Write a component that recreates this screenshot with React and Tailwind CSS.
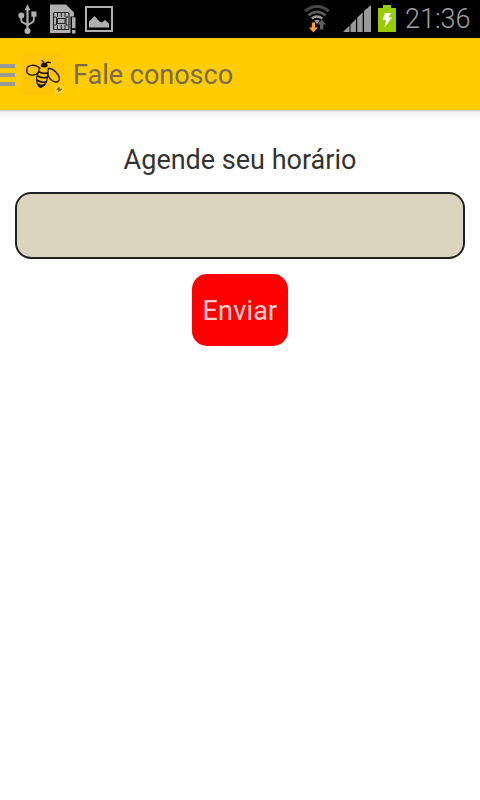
import { useState } from 'react';

const UsbIcon = () => (
  <svg className="w-[20px] h-[30px]" viewBox="0 0 20 30" fill="none" stroke="#b0b0b0" strokeWidth="1.8">
    <path d="M9.500 4v20" strokeWidth="2.2" />
    <path d="M3.200 11v4.500q0 2.600 2.400 3.400l3.900 2 3.900-2q2.400-.8 2.400-3.400V11" />
    <path d="M9.500 .3l3 6h-6z" fill="#b0b0b0" stroke="none" />
    <circle cx="3.300" cy="11.500" r="3" fill="#b0b0b0" stroke="none" />
    <rect x="13.300" y="7.500" width="5.200" height="5.200" fill="#b0b0b0" stroke="none" />
    <circle cx="9.500" cy="27" r="3" fill="#b0b0b0" stroke="none" />
  </svg>
);

const SimIcon = () => (
  <svg className="w-[26px] h-[30px]" viewBox="0 0 26 30">
    <path d="M0 .5h16l8 8V29H0z" fill="#b0b0b0" />
    <rect x="3.500" y="8.500" width="15.500" height="17" rx="1" fill="#b0b0b0" stroke="#222" strokeWidth="1.100" />
    <path d="M7.500 9v4M11.300 9v4M15 9v4M7.500 21v4M11.300 21v4M15 21v4M4 13h2.500v8H4M18.500 13H16v8h2.500" fill="none" stroke="#222" strokeWidth="1" />
    <rect x="7.500" y="14.500" width="7.500" height="5" fill="#b0b0b0" stroke="#222" strokeWidth="1.100" />
    <path d="M20.500 12.500H26V30h-5.500z" fill="#000" />
    <path d="M22 13.300h3.500v11H22zM22 26h3.500v3.500H22z" fill="#b0b0b0" />
  </svg>
);

const PictureIcon = () => (
  <svg className="w-[28px] h-[26px]" viewBox="0 0 28 26">
    <rect x="1" y="1" width="26" height="24" fill="none" stroke="#b0b0b0" strokeWidth="2" />
    <path d="M4 21.500v-6l5.500-5.500 5.500 6 2 .5 3-2.500 4 3.500v4z" fill="#b0b0b0" />
  </svg>
);

const WifiIcon = () => (
  <svg className="w-[26px] h-[28px]" viewBox="0 0 26 28" fill="none">
    <path d="M1.200 6.200q11.800-9.500 23.600 0" stroke="#454545" strokeWidth="3" />
    <path d="M4.500 10.300q8.500-7 17 0" stroke="#5c5c5c" strokeWidth="2.600" />
    <path d="M7.800 13.600q5.200-4.200 10.400 0" stroke="#9a9a9a" strokeWidth="2.600" />
    <path d="M10.200 15.800q2.800-2 5.600 0L13 19z" fill="#9a9a9a" />
    <path d="M7.800 17.500h3.200v5h3L9.400 27.500l-4.600-5h3z" fill="#ff9d2e" />
    <path d="M15.900 24.500v-5h-2.800l4.500-5 4.500 5h-2.800v5z" fill="#5c5c5c" />
  </svg>
);

const SignalIcon = () => (
  <svg className="w-[29px] h-[28px]" viewBox="0 0 29 28" fill="#9a9a9a">
    <path d="M0 27l6.500-6.500V27zM7.500 19.500l5.500-5.500v13H7.500zM14.200 12.800l5.500-5.500V27h-5.500zM21 6l7-6v27h-7z" />
  </svg>
);

const BatteryIcon = () => (
  <svg className="w-[18px] h-[27px]" viewBox="0 0 18 27">
    <path d="M5 0h8v3h5v24H0V3h5z" fill="#99cc00" />
    <path d="M7 8h6l-2.500 4.500H14L6.500 22.500 8 15H4.500z" fill="#fff" />
  </svg>
);

const BeeLogo = () => (
  <svg className="w-[42px] h-[42px]" viewBox="66 51 126 126" fill="none">
    <defs>
      <pattern id="comb" width="12" height="20" patternUnits="userSpaceOnUse">
        <path d="M6 0v4l6 3v6l-6 3v4M6 4L0 7v6l6 3" stroke="#ffcb10" strokeWidth="1" fill="none" />
      </pattern>
    </defs>
    <rect x="66" y="51" width="126" height="126" rx="16" fill="#ffc406" />
    <rect x="66" y="51" width="126" height="126" rx="16" fill="url(#comb)" />
    <g stroke="#17140a" strokeWidth="4" strokeLinecap="round" strokeLinejoin="round">
      <path d="M131 82q0-6-5-8M137 82q6-5 14-2" />
      <path d="M126 84q7-4 14 1l1 5q-8 5-17 0z" fill="#17140a" />
      <path d="M120 98C108 84 82 84 80 101C79 119 104 124 117 107" />
      <path d="M145 98C158 94 180 117 178 131C174 144 149 139 143 112" />
      <path d="M119 95L110 124Q108 145 121 154Q136 150 141 132L145 97" strokeWidth="3.500" />
      <path d="M117 107q13 8 26 3M113 120q15 8 28 4M111 133q15 9 28 4M114 145q10 5 20 1" strokeWidth="5" />
      <path d="M118 150l3 4 4-3" strokeWidth="4" />
    </g>
    <circle cx="178" cy="161" r="14" fill="#ffd52e" />
    <path d="M170 160h16M178 153l-2 15M173 156l9 8" stroke="#796516" strokeWidth="3.500" />
  </svg>
);

function StatusBar() {
  return (
    <div className="flex h-[38px] items-start justify-between bg-black">
      <div className="flex items-start pl-[18px]">
        <div className="pt-[4px]"><UsbIcon /></div>
        <div className="ml-[12px] pt-[4px]"><SimIcon /></div>
        <div className="ml-[9px] pt-[6px]"><PictureIcon /></div>
      </div>
      <div className="flex items-start pr-[8px]">
        <div className="pt-[5px]"><WifiIcon /></div>
        <div className="ml-[13px] pt-[5px]"><SignalIcon /></div>
        <div className="ml-[6px] pt-[5px]"><BatteryIcon /></div>
        <span className="ml-[9px] w-[67px] whitespace-nowrap text-[27px] font-light leading-[38px] text-[#a0a0a0]">21:36</span>
      </div>
    </div>
  );
}

function App() {
  const [horario, setHorario] = useState('');

  return (
    <div className="min-h-screen bg-white font-[Roboto,sans-serif]">
      <StatusBar />

      {/* Header */}
      <header className="flex h-[72px] items-center bg-[#ffcc00]">
        <button aria-label="Menu" className="mt-[2px] flex w-[15px] flex-col gap-[5px]">
          <span className="h-[4px] w-full bg-[#999]" />
          <span className="h-[4px] w-full bg-[#999]" />
          <span className="h-[4px] w-full bg-[#999]" />
        </button>
        <div className="ml-[7px]"><BeeLogo /></div>
        <h1 className="ml-[9px] pt-[2px] text-[27px] leading-[36px] text-[#7a6a51]">Fale conosco</h1>
      </header>
      <div className="h-[10px] bg-linear-to-b from-[#c8c8c8] via-[#f1f1f1] via-20% to-white" />

      {/* Form */}
      <form className="flex flex-col items-center px-[15px] pt-[22px]" onSubmit={(e) => e.preventDefault()}>
        <label htmlFor="horario" className="text-[27px] leading-[36px] text-[#333]">
          Agende seu horário
        </label>
        <input
          id="horario"
          type="text"
          value={horario}
          onChange={(e) => setHorario(e.target.value)}
          className="mt-[14px] h-[67px] w-full rounded-[16px] border-2 border-[#222] bg-[#dbd5bf] px-3 text-[27px] outline-none"
        />
        <button type="submit" className="mt-[15px] h-[72px] w-[96px] rounded-[15px] bg-[#ff0000] pt-[2px] text-[27px] tracking-[0.2px] text-[#ffcccc]">
          Enviar
        </button>
      </form>
    </div>
  );
}

export default App;
